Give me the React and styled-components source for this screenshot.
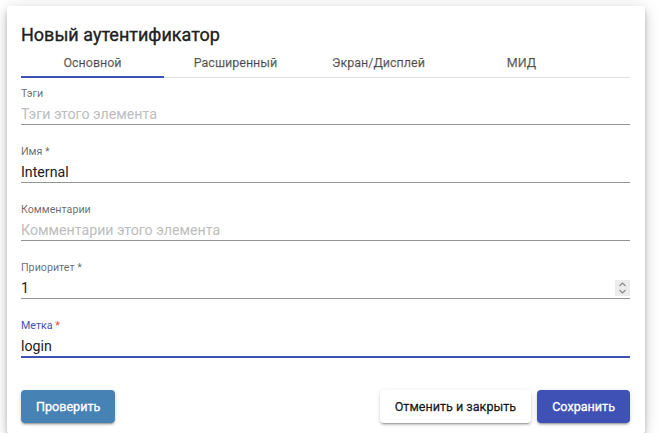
import React from 'react';
import styled, { createGlobalStyle } from 'styled-components';

const colors = {
  primary: '#3f51b5',
  check: '#4682b4',
  text: '#212121',
  muted: 'rgba(0, 0, 0, 0.6)',
  hint: '#bdbdbd',
  line: 'rgba(0, 0, 0, 0.42)',
  warn: '#f44336',
};

const GlobalStyle = createGlobalStyle`
  html, body {
    margin: 0;
    background: #ffffff;
    font-family: Roboto, "Liberation Sans", sans-serif;
  }
  * { box-sizing: border-box; }
`;

const Page = styled.div`
  padding: 6px 0 0 7px;
`;

/** Carte de la boîte de dialogue */
const Dialog = styled.section`
  width: 638px;
  padding: 17px 15px 10px 14px;
  background: #ffffff;
  border-radius: 2px;
  box-shadow: 0 3px 5px -1px rgba(0, 0, 0, 0.2), 0 6px 10px 0 rgba(0, 0, 0, 0.14),
    0 1px 18px 0 rgba(0, 0, 0, 0.12);
`;

const Title = styled.h2`
  margin: 0;
  font-size: 18px;
  line-height: 24px;
  font-weight: 400;
  color: ${colors.text};
  -webkit-text-stroke: 0.35px ${colors.text};
`;

const TabBar = styled.div`
  display: flex;
  height: 31px;
  border-bottom: 1px solid #e0e0e0;
`;

const Tab = styled.div`
  flex: 0 0 143px;
  height: 31px;
  margin-bottom: -1px;
  padding-top: 2px;
  display: flex;
  align-items: center;
  justify-content: center;
  font-size: 12.5px;
  color: rgba(0, 0, 0, 0.6);
  -webkit-text-stroke: 0.25px rgba(0, 0, 0, 0.6);
  border-bottom: 2px solid ${(p) => (p.$active ? colors.primary : 'transparent')};
`;

const Form = styled.div`
  display: flex;
  flex-direction: column;
  gap: 20px;
  margin-top: 9px;
`;

const Field = styled.label`
  display: flex;
  flex-direction: column;
`;

const Label = styled.span`
  font-size: 10.7px;
  line-height: 13px;
  margin-bottom: 3px;
  color: ${(p) => (p.$focused ? colors.primary : colors.muted)};
`;

const Star = styled.span`
  color: ${(p) => (p.$focused ? colors.warn : 'inherit')};
`;

const InputRow = styled.div`
  display: flex;
  align-items: flex-end;
  border-bottom: ${(p) => (p.$focused ? `2px solid ${colors.primary}` : `1px solid ${colors.line}`)};
`;

const Input = styled.input`
  flex: 1;
  min-width: 0;
  height: 21px;
  padding: 0;
  border: none;
  outline: none;
  background: transparent;
  font-family: inherit;
  font-size: 14.2px;
  color: ${colors.text};
  &::placeholder {
    color: ${colors.hint};
  }
`;

const Spinner = styled.div`
  width: 15px;
  height: 16px;
  margin-bottom: 2px;
  display: flex;
  align-items: center;
  justify-content: center;
  background: #ececec;
`;

const Actions = styled.div`
  display: flex;
  align-items: center;
  gap: 6px;
  margin-top: 32px;
`;

const Spacer = styled.div`
  flex: 1;
`;

const Button = styled.button`
  height: 33px;
  padding: 0 15px;
  border: none;
  border-radius: 4px;
  font-family: inherit;
  font-size: 12.6px;
  color: ${(p) => (p.$bg ? '#ffffff' : 'rgba(0, 0, 0, 0.87)')};
  -webkit-text-stroke: 0.3px ${(p) => (p.$bg ? '#ffffff' : 'rgba(0, 0, 0, 0.87)')};
  background: ${(p) => p.$bg || '#ffffff'};
  box-shadow: 0 3px 1px -2px rgba(0, 0, 0, 0.2), 0 2px 2px 0 rgba(0, 0, 0, 0.14),
    0 1px 5px 0 rgba(0, 0, 0, 0.12);
`;

const tabs = ['Основной', 'Расширенный', 'Экран/Дисплей', 'МИД'];

const fields = [
  { label: 'Тэги', placeholder: 'Тэги этого элемента' },
  { label: 'Имя', required: true, value: 'Internal' },
  { label: 'Комментарии', placeholder: 'Комментарии этого элемента' },
  { label: 'Приоритет', required: true, value: '1', number: true },
  { label: 'Метка', required: true, value: 'login', focused: true },
];

function SpinIcon() {
  return (
    <svg width="9" height="14" viewBox="0 0 9 14" fill="none" stroke="#8a8a8a" strokeWidth="1.2">
      <path d="M1.5 5 L4.5 2 L7.5 5" />
      <path d="M1.5 9 L4.5 12 L7.5 9" />
    </svg>
  );
}

function FormField({ label, required, value, placeholder, number, focused }) {
  return (
    <Field>
      <Label $focused={focused}>
        {label}
        {required && <Star $focused={focused}> *</Star>}
      </Label>
      <InputRow $focused={focused}>
        <Input defaultValue={value} placeholder={placeholder} readOnly />
        {number && (
          <Spinner>
            <SpinIcon />
          </Spinner>
        )}
      </InputRow>
    </Field>
  );
}

export default function App() {
  return (
    <Page>
      <GlobalStyle />
      <Dialog>
        <Title>Новый аутентификатор</Title>
        <TabBar>
          {tabs.map((t, i) => (
            <Tab key={t} $active={i === 0}>
              {t}
            </Tab>
          ))}
        </TabBar>
        <Form>
          {fields.map((f) => (
            <FormField key={f.label} {...f} />
          ))}
        </Form>
        <Actions>
          <Button $bg={colors.check}>Проверить</Button>
          <Spacer />
          <Button>Отменить и закрыть</Button>
          <Button $bg={colors.primary}>Сохранить</Button>
        </Actions>
      </Dialog>
    </Page>
  );
}
